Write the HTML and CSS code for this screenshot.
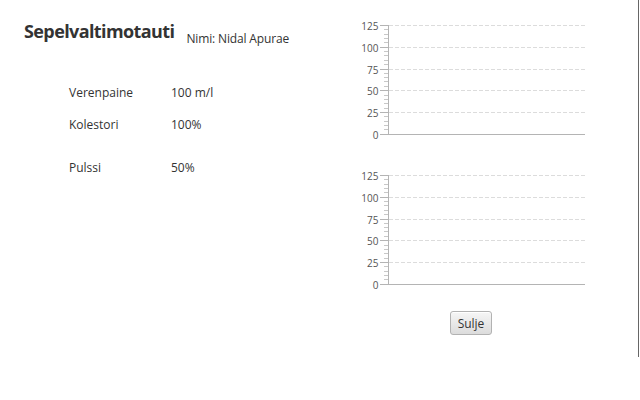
FILE: index.html
```html
<!DOCTYPE html>
<html lang="fi">
<head>
<meta charset="utf-8">
<title>Sepelvaltimotauti</title>
<link rel="stylesheet" href="styles.css">
</head>
<body>
<div class="app">
  <section class="info">
    <header class="head">
      <h1 class="title">Sepelvaltimotauti</h1>
      <span class="patient">Nimi: Nidal Apurae</span>
    </header>
    <div class="vitals">
      <div class="row"><span class="key">Verenpaine</span><span class="val">100 m/l</span></div>
      <div class="row"><span class="key">Kolestori</span><span class="val">100%</span></div>
      <div class="row row-gap"><span class="key">Pulssi</span><span class="val">50%</span></div>
    </div>
  </section>
  <section class="charts">
    <svg class="chart" width="230" height="130" viewBox="0 0 230 130">
      <g class="grid">
        <line x1="33" y1="9.5" x2="229" y2="9.5"/>
        <line x1="33" y1="31.5" x2="229" y2="31.5"/>
        <line x1="33" y1="53.5" x2="229" y2="53.5"/>
        <line x1="33" y1="74.5" x2="229" y2="74.5"/>
        <line x1="33" y1="96.5" x2="229" y2="96.5"/>
      </g>
      <g class="minor">
        <line x1="28" y1="13.5" x2="32" y2="13.5"/><line x1="28" y1="18.5" x2="32" y2="18.5"/><line x1="28" y1="22.5" x2="32" y2="22.5"/><line x1="28" y1="26.5" x2="32" y2="26.5"/>
        <line x1="28" y1="35.5" x2="32" y2="35.5"/><line x1="28" y1="39.5" x2="32" y2="39.5"/><line x1="28" y1="44.5" x2="32" y2="44.5"/><line x1="28" y1="48.5" x2="32" y2="48.5"/>
        <line x1="28" y1="57.5" x2="32" y2="57.5"/><line x1="28" y1="61.5" x2="32" y2="61.5"/><line x1="28" y1="65.5" x2="32" y2="65.5"/><line x1="28" y1="70.5" x2="32" y2="70.5"/>
        <line x1="28" y1="79.5" x2="32" y2="79.5"/><line x1="28" y1="83.5" x2="32" y2="83.5"/><line x1="28" y1="87.5" x2="32" y2="87.5"/><line x1="28" y1="92.5" x2="32" y2="92.5"/>
        <line x1="28" y1="100.5" x2="32" y2="100.5"/><line x1="28" y1="105.5" x2="32" y2="105.5"/><line x1="28" y1="109.5" x2="32" y2="109.5"/><line x1="28" y1="113.5" x2="32" y2="113.5"/>
      </g>
      <g class="axis">
        <line x1="32.5" y1="9" x2="32.5" y2="118.5"/>
        <line x1="32" y1="118.5" x2="229" y2="118.5"/>
        <line x1="24" y1="9.5" x2="32" y2="9.5"/>
        <line x1="24" y1="31.5" x2="32" y2="31.5"/>
        <line x1="24" y1="53.5" x2="32" y2="53.5"/>
        <line x1="24" y1="74.5" x2="32" y2="74.5"/>
        <line x1="24" y1="96.5" x2="32" y2="96.5"/>
        <line x1="24" y1="118.5" x2="32" y2="118.5"/>
      </g>
      <g class="labels">
        <text x="22.5" y="9.5">125</text>
        <text x="22.5" y="31.5">100</text>
        <text x="22.5" y="53.5">75</text>
        <text x="22.5" y="74.5">50</text>
        <text x="22.5" y="96.5">25</text>
        <text x="22.5" y="118.5">0</text>
      </g>
    </svg>
    <svg class="chart" width="230" height="130" viewBox="0 0 230 130">
      <g class="grid">
        <line x1="33" y1="9.5" x2="229" y2="9.5"/>
        <line x1="33" y1="31.5" x2="229" y2="31.5"/>
        <line x1="33" y1="53.5" x2="229" y2="53.5"/>
        <line x1="33" y1="74.5" x2="229" y2="74.5"/>
        <line x1="33" y1="96.5" x2="229" y2="96.5"/>
      </g>
      <g class="minor">
        <line x1="28" y1="13.5" x2="32" y2="13.5"/><line x1="28" y1="18.5" x2="32" y2="18.5"/><line x1="28" y1="22.5" x2="32" y2="22.5"/><line x1="28" y1="26.5" x2="32" y2="26.5"/>
        <line x1="28" y1="35.5" x2="32" y2="35.5"/><line x1="28" y1="39.5" x2="32" y2="39.5"/><line x1="28" y1="44.5" x2="32" y2="44.5"/><line x1="28" y1="48.5" x2="32" y2="48.5"/>
        <line x1="28" y1="57.5" x2="32" y2="57.5"/><line x1="28" y1="61.5" x2="32" y2="61.5"/><line x1="28" y1="65.5" x2="32" y2="65.5"/><line x1="28" y1="70.5" x2="32" y2="70.5"/>
        <line x1="28" y1="79.5" x2="32" y2="79.5"/><line x1="28" y1="83.5" x2="32" y2="83.5"/><line x1="28" y1="87.5" x2="32" y2="87.5"/><line x1="28" y1="92.5" x2="32" y2="92.5"/>
        <line x1="28" y1="100.5" x2="32" y2="100.5"/><line x1="28" y1="105.5" x2="32" y2="105.5"/><line x1="28" y1="109.5" x2="32" y2="109.5"/><line x1="28" y1="113.5" x2="32" y2="113.5"/>
      </g>
      <g class="axis">
        <line x1="32.5" y1="9" x2="32.5" y2="118.5"/>
        <line x1="32" y1="118.5" x2="229" y2="118.5"/>
        <line x1="24" y1="9.5" x2="32" y2="9.5"/>
        <line x1="24" y1="31.5" x2="32" y2="31.5"/>
        <line x1="24" y1="53.5" x2="32" y2="53.5"/>
        <line x1="24" y1="74.5" x2="32" y2="74.5"/>
        <line x1="24" y1="96.5" x2="32" y2="96.5"/>
        <line x1="24" y1="118.5" x2="32" y2="118.5"/>
      </g>
      <g class="labels">
        <text x="22.5" y="9.5">125</text>
        <text x="22.5" y="31.5">100</text>
        <text x="22.5" y="53.5">75</text>
        <text x="22.5" y="74.5">50</text>
        <text x="22.5" y="96.5">25</text>
        <text x="22.5" y="118.5">0</text>
      </g>
    </svg>
    <button class="close" type="button">Sulje</button>
  </section>
</div>
</body>
</html>
```

FILE: styles.css
```css
html, body {
  margin: 0;
  padding: 0;
  background: #ffffff;
}

body {
  font-family: "Open Sans", "Noto Sans", sans-serif;
  color: #333333;
  width: 640px;
  height: 400px;
  overflow: hidden;
}

.app {
  box-sizing: border-box;
  width: 639px;
  height: 357px;
  border-right: 1px solid #666666;
  display: flex;
}

.info {
  width: 356px;
  padding: 20px 0 0 24px;
  box-sizing: border-box;
}

.head {
  display: flex;
  align-items: flex-start;
  gap: 12px;
}

.title {
  margin: 0;
  font-size: 18px;
  line-height: 22px;
  font-weight: 700;
  letter-spacing: -0.6px;
  color: #333333;
}

.patient {
  margin-top: 11px;
  font-size: 12px;
  line-height: 16px;
  letter-spacing: -0.15px;
}

.vitals {
  margin: 38px 0 0 45px;
  display: grid;
  row-gap: 16px;
  font-size: 12px;
  line-height: 16px;
}

.row {
  display: grid;
  grid-template-columns: 102px auto;
}

.row-gap {
  margin-top: 11px;
}

.charts {
  width: 230px;
  padding-top: 16px;
  display: flex;
  flex-direction: column;
  align-items: center;
  gap: 20px;
}

.chart {
  display: block;
}

.grid line {
  stroke: #dcdcdc;
  stroke-width: 1;
  stroke-dasharray: 4 2;
}

.minor line {
  stroke: #c8c8c8;
  stroke-width: 1;
}

.axis line {
  stroke: #b4b4b4;
  stroke-width: 1;
}

.labels text {
  font-family: "Open Sans", "Noto Sans", sans-serif;
  font-size: 10px;
  fill: #555555;
  text-anchor: end;
  dominant-baseline: central;
}

.close {
  margin-top: -5px;
  width: 42px;
  height: 24px;
  padding: 0;
  font-family: "Open Sans", "Noto Sans", sans-serif;
  font-size: 12px;
  color: #333333;
  border: 1px solid #b2b2b2;
  border-radius: 3px;
  background: linear-gradient(#f6f6f6, #dcdcdc);
  box-shadow: inset 0 1px 0 #ffffff;
}
```
